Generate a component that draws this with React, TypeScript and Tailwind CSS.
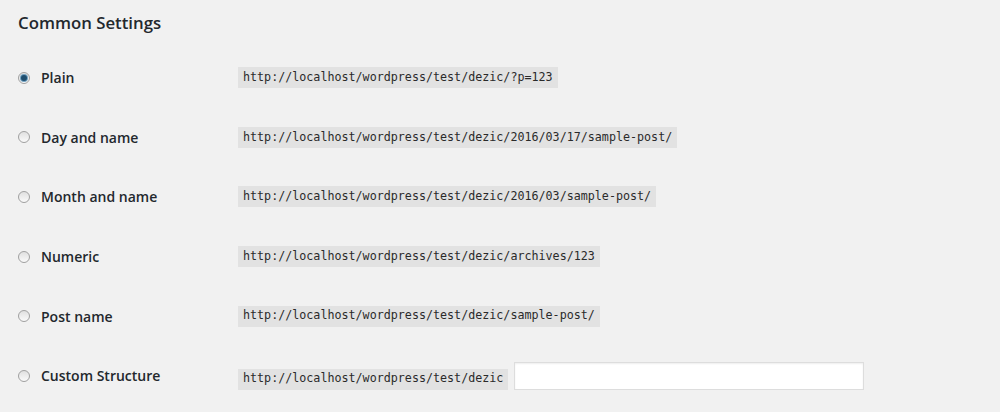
import React from "react";

const rows = [
  { label: "Plain", url: "http://localhost/wordpress/test/dezic/?p=123", checked: true },
  { label: "Day and name", url: "http://localhost/wordpress/test/dezic/2016/03/17/sample-post/" },
  { label: "Month and name", url: "http://localhost/wordpress/test/dezic/2016/03/sample-post/" },
  { label: "Numeric", url: "http://localhost/wordpress/test/dezic/archives/123" },
  { label: "Post name", url: "http://localhost/wordpress/test/dezic/sample-post/" },
];

function Radio({ checked }: { checked?: boolean }) {
  return (
    <div className="w-[12px] h-[12px] rounded-full border border-[#a0a0a0] bg-gradient-to-b from-[#e0e0e0] to-[#fafafa] flex items-center justify-center shrink-0">
      {checked && (
        <div className="w-[6px] h-[6px] rounded-full bg-[#1f4e6e] shadow-[0_0_0_1px_#6fa0c0]" />
      )}
    </div>
  );
}

function Code({ children }: { children: React.ReactNode }) {
  return (
    <code className="bg-[#e2e2e2] text-[#2a2a2a] px-[5px] h-[21px] flex items-center text-[11.7px] [font-family:'DejaVu_Sans_Mono','Liberation_Mono',monospace] whitespace-nowrap">
      {children}
    </code>
  );
}

export default function App() {
  return (
    <div className="w-[1000px] h-[412px] bg-[#f1f1f1] pl-[18px] [font-family:'Open_Sans',sans-serif] text-[#23282d] overflow-hidden">
      <h2 className="text-[16.8px] font-semibold leading-[25px] pt-[10px]">Common Settings</h2>
      <div className="mt-[13px]">
        {rows.map((r) => (
          <div key={r.label} className="h-[59.6px] flex items-center">
            <div className="w-[220px] flex items-center gap-[11px]">
              <Radio checked={r.checked} />
              <span className="text-[14px] font-semibold">{r.label}</span>
            </div>
            <Code>{r.url}</Code>
          </div>
        ))}
        <div className="h-[59.6px] flex items-center">
          <div className="w-[220px] flex items-center gap-[11px]">
            <Radio />
            <span className="text-[14px] font-semibold">Custom Structure</span>
          </div>
          <div className="flex items-end gap-[6px]">
            <Code>http://localhost/wordpress/test/dezic</Code>
            <div className="w-[350px] h-[28px] bg-white border border-[#dddddd] shadow-[inset_0_1px_2px_rgba(0,0,0,0.07)]" />
          </div>
        </div>
      </div>
    </div>
  );
}
